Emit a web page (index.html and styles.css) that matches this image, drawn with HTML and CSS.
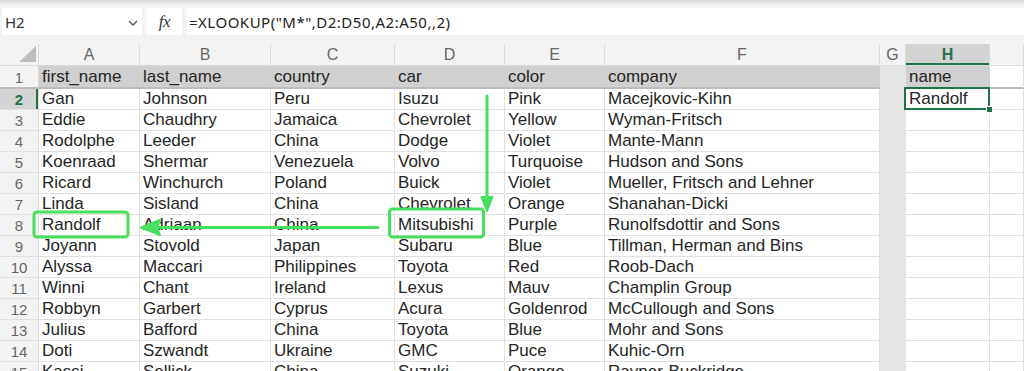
FILE: index.html
```html
<!DOCTYPE html>
<html>
<head>
<meta charset="utf-8">
<link rel="stylesheet" href="styles.css">
</head>
<body>
<div class="app">
  <div class="formula-bar">
    <div class="name-box">
      <span class="name-text">H2</span>
      <svg class="chev" width="10" height="6" viewBox="0 0 10 6"><polyline points="1,1 5,5 9,1" fill="none" stroke="#555" stroke-width="1.3"/></svg>
    </div>
    <div class="fx-box"><span class="fx">fx</span></div>
    <div class="formula-input">=XLOOKUP("M*",D2:D50,A2:A50,,2)</div>
  </div>

  <div class="sheet">
    <div class="corner"><span class="tri"></span></div>
    <div class="ch">A</div><div class="ch">B</div><div class="ch">C</div><div class="ch">D</div><div class="ch">E</div><div class="ch">F</div><div class="ch">G</div><div class="ch ch-sel">H</div><div class="ch"></div>

    <div class="rh rh-1">1</div>
    <div class="c hd">first_name</div><div class="c hd">last_name</div><div class="c hd">country</div><div class="c hd">car</div><div class="c hd">color</div><div class="c hd">company</div><div class="c g hd-g"></div><div class="c hd">name</div><div class="c hd-blank"></div>

    <div class="rh rh-sel">2</div>
    <div class="c">Gan</div><div class="c">Johnson</div><div class="c">Peru</div><div class="c">Isuzu</div><div class="c">Pink</div><div class="c">Macejkovic-Kihn</div><div class="c g"></div><div class="c active">Randolf<span class="sel"><span class="handle"></span></span></div><div class="c"></div>

    <div class="rh">3</div>
    <div class="c">Eddie</div><div class="c">Chaudhry</div><div class="c">Jamaica</div><div class="c">Chevrolet</div><div class="c">Yellow</div><div class="c">Wyman-Fritsch</div><div class="c g"></div><div class="c"></div><div class="c"></div>

    <div class="rh">4</div>
    <div class="c">Rodolphe</div><div class="c">Leeder</div><div class="c">China</div><div class="c">Dodge</div><div class="c">Violet</div><div class="c">Mante-Mann</div><div class="c g"></div><div class="c"></div><div class="c"></div>

    <div class="rh">5</div>
    <div class="c">Koenraad</div><div class="c">Shermar</div><div class="c">Venezuela</div><div class="c">Volvo</div><div class="c">Turquoise</div><div class="c">Hudson and Sons</div><div class="c g"></div><div class="c"></div><div class="c"></div>

    <div class="rh">6</div>
    <div class="c">Ricard</div><div class="c">Winchurch</div><div class="c">Poland</div><div class="c">Buick</div><div class="c">Violet</div><div class="c">Mueller, Fritsch and Lehner</div><div class="c g"></div><div class="c"></div><div class="c"></div>

    <div class="rh">7</div>
    <div class="c">Linda</div><div class="c">Sisland</div><div class="c">China</div><div class="c">Chevrolet</div><div class="c">Orange</div><div class="c">Shanahan-Dicki</div><div class="c g"></div><div class="c"></div><div class="c"></div>

    <div class="rh">8</div>
    <div class="c">Randolf</div><div class="c">Adriaan</div><div class="c">China</div><div class="c">Mitsubishi</div><div class="c">Purple</div><div class="c">Runolfsdottir and Sons</div><div class="c g"></div><div class="c"></div><div class="c"></div>

    <div class="rh">9</div>
    <div class="c">Joyann</div><div class="c">Stovold</div><div class="c">Japan</div><div class="c">Subaru</div><div class="c">Blue</div><div class="c">Tillman, Herman and Bins</div><div class="c g"></div><div class="c"></div><div class="c"></div>

    <div class="rh">10</div>
    <div class="c">Alyssa</div><div class="c">Maccari</div><div class="c">Philippines</div><div class="c">Toyota</div><div class="c">Red</div><div class="c">Roob-Dach</div><div class="c g"></div><div class="c"></div><div class="c"></div>

    <div class="rh">11</div>
    <div class="c">Winni</div><div class="c">Chant</div><div class="c">Ireland</div><div class="c">Lexus</div><div class="c">Mauv</div><div class="c">Champlin Group</div><div class="c g"></div><div class="c"></div><div class="c"></div>

    <div class="rh">12</div>
    <div class="c">Robbyn</div><div class="c">Garbert</div><div class="c">Cyprus</div><div class="c">Acura</div><div class="c">Goldenrod</div><div class="c">McCullough and Sons</div><div class="c g"></div><div class="c"></div><div class="c"></div>

    <div class="rh">13</div>
    <div class="c">Julius</div><div class="c">Bafford</div><div class="c">China</div><div class="c">Toyota</div><div class="c">Blue</div><div class="c">Mohr and Sons</div><div class="c g"></div><div class="c"></div><div class="c"></div>

    <div class="rh">14</div>
    <div class="c">Doti</div><div class="c">Szwandt</div><div class="c">Ukraine</div><div class="c">GMC</div><div class="c">Puce</div><div class="c">Kuhic-Orn</div><div class="c g"></div><div class="c"></div><div class="c"></div>

    <div class="rh">15</div>
    <div class="c">Kassi</div><div class="c">Sellick</div><div class="c">China</div><div class="c">Suzuki</div><div class="c">Orange</div><div class="c">Rayner-Buckridge</div><div class="c g"></div><div class="c"></div><div class="c"></div>
  </div>

  <svg class="annot" width="1024" height="371" viewBox="0 0 1024 371">
    <g fill="none" stroke="#46e05c" stroke-width="3" stroke-linejoin="round" stroke-linecap="round">
      <rect x="34" y="212" width="94" height="25" rx="3"/>
      <rect x="389.5" y="209" width="94" height="28" rx="3"/>
      <line x1="487" y1="96" x2="487" y2="200"/>
      <line x1="378" y1="227.5" x2="152" y2="227.5"/>
    </g>
    <g fill="#46e05c" stroke="#46e05c" stroke-width="2" stroke-linejoin="round">
      <polygon points="481.5,197 492.5,197 487,211"/>
      <polygon points="141,227.5 160,220 157,227.5 160,235"/>
    </g>
  </svg>
</div>
</body>
</html>
```

FILE: styles.css
```css
* { box-sizing: border-box; }

html, body {
  margin: 0;
  padding: 0;
  width: 1024px;
  height: 371px;
  overflow: hidden;
  background: #f3f3f3;
}

.app {
  position: relative;
  width: 1024px;
  height: 371px;
  overflow: hidden;
  background: linear-gradient(#d8d8d8 0px, #e9e9e9 3px, #f3f3f3 6px);
}

.formula-bar {
  display: flex;
  height: 44px;
  padding: 8px 0 9px 2px;
  gap: 5px;
}

.name-box {
  width: 140px;
  height: 27px;
  background: #fff;
  display: flex;
  align-items: center;
  justify-content: space-between;
  padding: 0 4px 0 3px;
  font-family: "Noto Sans", "Open Sans", sans-serif;
  font-size: 15px;
  color: #333;
}

.chev { margin-top: 2px; }

.fx-box {
  width: 35px;
  height: 27px;
  background: #fff;
  display: flex;
  align-items: center;
  justify-content: center;
}

.fx {
  font-family: "Liberation Serif", serif;
  font-style: italic;
  font-size: 17px;
  color: #333;
  letter-spacing: -0.5px;
}

.formula-input {
  flex: 1;
  height: 27px;
  background: #fff;
  display: flex;
  align-items: center;
  padding-left: 2px;
  font-family: "Noto Sans", "Open Sans", sans-serif;
  font-size: 15px;
  letter-spacing: 0.5px;
  color: #222;
  white-space: nowrap;
}

.sheet {
  display: grid;
  grid-template-columns: 39px 101px 131px 124px 110px 100px 275px 26px 84px 1fr;
  grid-template-rows: 22px 23px repeat(14, 21px);
  font-family: "Liberation Sans", Arial, sans-serif;
}

.corner {
  position: relative;
  border-right: 1px solid #dadada;
  border-bottom: 1px solid #dadada;
}

.tri {
  position: absolute;
  right: 2px;
  bottom: 3px;
  width: 0;
  height: 0;
  border-left: 17px solid transparent;
  border-bottom: 16px solid #bdbdbd;
}

.ch {
  display: flex;
  align-items: center;
  justify-content: center;
  border-right: 1px solid #dadada;
  border-bottom: 1px solid #dadada;
  font-size: 16px;
  color: #666;
  padding-top: 1px;
}

.ch-sel {
  background: #d4d4d4;
  color: #217346;
  font-weight: bold;
  box-shadow: inset 0 -2px 0 #217346;
}

.rh {
  display: flex;
  align-items: center;
  justify-content: center;
  border-right: 1px solid #dadada;
  border-bottom: 1px solid #e0e0e0;
  font-size: 15px;
  color: #666;
  padding-top: 1px;
}

.rh-1 { border-bottom: 2px solid #bcbcbc; }

.rh-sel {
  background: #d4d4d4;
  color: #217346;
  font-weight: bold;
  box-shadow: inset -2px 0 0 #217346;
}

.c {
  background: #fff;
  border-right: 1px solid #e1e1e1;
  border-bottom: 1px solid #e1e1e1;
  padding-left: 3px;
  font-size: 17px;
  line-height: 20px;
  color: #252525;
  white-space: nowrap;
  overflow: visible;
}

.hd {
  background: #d0d0d0;
  border-right-color: #d0d0d0;
  border-bottom: 2px solid #bcbcbc;
  line-height: 21px;
}

.hd-g {
  background: #e1e1e1;
  border-right-color: #e1e1e1;
  border-bottom: 2px solid #bcbcbc;
}

.hd-blank {
  background: #fff;
  border-right: 1px solid #e1e1e1;
  border-bottom: 2px solid #bcbcbc;
}

.g {
  background: #e4e4e4;
  border-right-color: #e4e4e4;
  border-bottom-color: #e4e4e4;
}

.active { position: relative; }

.sel {
  position: absolute;
  left: -2px;
  top: -2px;
  right: -1px;
  bottom: -1px;
  border: 2px solid #217346;
}

.handle {
  position: absolute;
  right: -5px;
  bottom: -5px;
  width: 7px;
  height: 7px;
  background: #217346;
  border: 1px solid #fff;
}

.annot {
  position: absolute;
  left: 0;
  top: 0;
  pointer-events: none;
}
```
